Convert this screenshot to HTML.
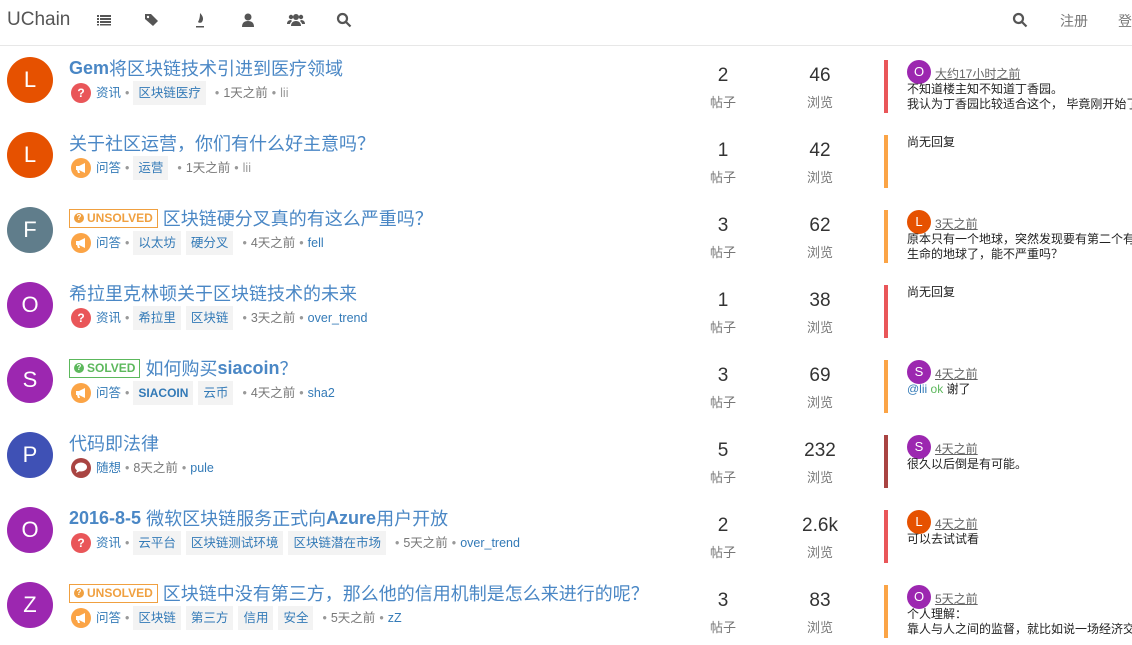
<!DOCTYPE html>
<html><head><meta charset="utf-8"><style>
*{margin:0;padding:0;box-sizing:border-box}
body{width:1132px;height:640px;overflow:hidden;background:#fff;font-family:"Liberation Sans","Noto Sans CJK SC",sans-serif;color:#333;position:relative}
.hdr{position:absolute;left:0;top:0;width:1132px;height:46px;border-bottom:1px solid #e7e7e7}
.logo{position:absolute;left:7px;top:9px;font-size:19px;color:#555}
.ic{position:absolute;top:12px;width:16px;height:16px}
.nav{position:absolute;top:11px;font-size:14px;color:#777;white-space:nowrap}
.row{position:absolute;left:0;width:1132px;height:75px}
.av{position:absolute;left:7px;top:12px;width:46px;height:46px;border-radius:50%;color:#fff;font-size:22px;text-align:center;line-height:46px}
.title{position:absolute;left:69px;top:11px;font-size:18px;color:#4a87c5;white-space:nowrap;display:flex;align-items:center;height:24px}
.title b{font-weight:bold}
.badge{display:inline-flex;align-items:center;font-size:12px;font-weight:bold;border:1px solid;padding:0 4px;height:19px;margin-right:5px}
.q{display:inline-block;width:10px;height:10px;border-radius:50%;color:#fff;font-size:8px;line-height:10px;text-align:center;margin-right:3px}
.meta{position:absolute;left:71px;top:36px;font-size:12.5px;color:#777;white-space:nowrap;height:24px;line-height:24px}
.meta>span{display:inline-block;vertical-align:top;height:24px;line-height:24px}
.meta>span.cat{width:20px;height:20px;margin-top:2px;border-radius:50%;color:#fff;font-size:12px;font-weight:bold;margin-right:5px;text-align:center;line-height:20px}
.cat svg{display:block}
.cn{color:#337ab7}
.meta>span.dot{margin:0 4px;color:#999}
.meta>span.tag{background:#f3f3f3;color:#337ab7;padding:0 5px;margin-right:5px}
.a{color:#337ab7}
.num{position:absolute;top:20px;width:80px;text-align:center;font-size:19px;color:#333}
.lab{position:absolute;top:47px;width:80px;text-align:center;font-size:13px;color:#777}
.bar{position:absolute;left:884px;top:15px;width:4px;height:53px}
.rav{position:absolute;left:907px;top:15px;width:24px;height:24px;border-radius:50%;color:#fff;font-size:13px;text-align:center;line-height:24px}
.rt{position:absolute;left:935px;top:20px;font-size:12px;color:#666;text-decoration:underline}
.rc{position:absolute;left:907px;top:37px;font-size:12px;line-height:15px;color:#222;white-space:nowrap}
</style></head><body>
<svg width="0" height="0" style="position:absolute"><defs>
<symbol id="mega" viewBox="0 0 20 20"><path d="M5 8h3l6-3v10l-6-3H5z M6 12l1 3h2l-1-3z" fill="#fff"/></symbol>
<symbol id="chat" viewBox="0 0 20 20"><ellipse cx="10" cy="9" rx="6" ry="4.5" fill="#fff"/><path d="M6 12l-1 3 4-2z" fill="#fff"/></symbol>
</defs></svg>
<div class="hdr">
<div class="logo">UChain</div>
<svg class="ic" style="left:96px" viewBox="0 0 16 16" fill="#555"><rect x="1" y="3" width="2" height="2"/><rect x="4" y="3" width="11" height="2"/><rect x="1" y="6" width="2" height="2"/><rect x="4" y="6" width="11" height="2"/><rect x="1" y="9" width="2" height="2"/><rect x="4" y="9" width="11" height="2"/><rect x="1" y="12" width="2" height="1.5"/><rect x="4" y="12" width="11" height="1.5"/></svg>
<svg class="ic" style="left:144px" viewBox="0 0 16 16" fill="#555"><path d="M1 2h6l7 7-5 5-8-7z"/><circle cx="4" cy="5" r="1.2" fill="#fff"/></svg>
<svg class="ic" style="left:192px" viewBox="0 0 16 16" fill="#555"><path d="M8 1c3 3 4 6 2 9-1 1-3 1-4 0 1-2 2-4 2-9zM4 14h8v1.5H4z"/></svg>
<svg class="ic" style="left:240px" viewBox="0 0 16 16" fill="#555"><circle cx="8" cy="5" r="3.5"/><path d="M2 15c0-4 2-6 6-6s6 2 6 6z"/></svg>
<svg class="ic" style="left:287px;width:18px" viewBox="0 0 18 16" fill="#555"><circle cx="9" cy="5" r="3"/><circle cx="4" cy="5" r="2.2"/><circle cx="14" cy="5" r="2.2"/><path d="M4 14c0-3 2-5 5-5s5 2 5 5z"/><path d="M0 12c0-2 1-4 4-4l1 1c-1 1-2 2-2 3z"/><path d="M18 12c0-2-1-4-4-4l-1 1c1 1 2 2 2 3z"/></svg>
<svg class="ic" style="left:336px" viewBox="0 0 16 16" fill="none" stroke="#555" stroke-width="2.2"><circle cx="6.5" cy="6.5" r="4.5"/><path d="M10 10l4.5 4.5"/></svg>
<svg class="ic" style="left:1012px" viewBox="0 0 16 16" fill="none" stroke="#555" stroke-width="2.2"><circle cx="6.5" cy="6.5" r="4.5"/><path d="M10 10l4.5 4.5"/></svg>
<div class="nav" style="left:1060px">注册</div>
<div class="nav" style="left:1118px">登录</div>
</div>

<div class="row" style="top:45px">
<div class="av" style="background:#e65100">L</div>
<div class="title"><b>Gem</b>将区块链技术引进到医疗领域</div>
<div class="meta"><span class="cat" style="background:#e95659">?</span><span class="cn">资讯</span><span class="dot">•</span><span class="tag">区块链医疗</span><span class="dot">•</span><span>1天之前</span><span class="dot">•</span><span style="color:#999">lii</span></div>
<div class="num" style="left:683px">2</div><div class="lab" style="left:683px">帖子</div>
<div class="num" style="left:780px">46</div><div class="lab" style="left:780px">浏览</div>
<div class="bar" style="background:#e95659"></div>
<div class="rav" style="background:#9c27b0">O</div><div class="rt">大约17小时之前</div>
<div class="rc">不知道楼主知不知道丁香园。<br>我认为丁香园比较适合这个， 毕竟刚开始了</div>
</div>

<div class="row" style="top:120px">
<div class="av" style="background:#e65100">L</div>
<div class="title">关于社区运营，你们有什么好主意吗？</div>
<div class="meta"><span class="cat" style="background:#fba446"><svg width="20" height="20"><use href="#mega"/></svg></span><span class="cn">问答</span><span class="dot">•</span><span class="tag">运营</span><span class="dot">•</span><span>1天之前</span><span class="dot">•</span><span style="color:#999">lii</span></div>
<div class="num" style="left:683px">1</div><div class="lab" style="left:683px">帖子</div>
<div class="num" style="left:780px">42</div><div class="lab" style="left:780px">浏览</div>
<div class="bar" style="background:#fba446"></div>
<div class="rc" style="top:15px">尚无回复</div>
</div>

<div class="row" style="top:195px">
<div class="av" style="background:#607d8b">F</div>
<div class="title"><span class="badge" style="color:#f0a040;border-color:#f0a040"><span class="q" style="background:#f0a040">?</span>UNSOLVED</span>区块链硬分叉真的有这么严重吗？</div>
<div class="meta"><span class="cat" style="background:#fba446"><svg width="20" height="20"><use href="#mega"/></svg></span><span class="cn">问答</span><span class="dot">•</span><span class="tag">以太坊</span><span class="tag">硬分叉</span><span class="dot">•</span><span>4天之前</span><span class="dot">•</span><span class="a">fell</span></div>
<div class="num" style="left:683px">3</div><div class="lab" style="left:683px">帖子</div>
<div class="num" style="left:780px">62</div><div class="lab" style="left:780px">浏览</div>
<div class="bar" style="background:#fba446"></div>
<div class="rav" style="background:#e65100">L</div><div class="rt">3天之前</div>
<div class="rc">原本只有一个地球，突然发现要有第二个有<br>生命的地球了，能不严重吗？</div>
</div>

<div class="row" style="top:270px">
<div class="av" style="background:#9c27b0">O</div>
<div class="title">希拉里克林顿关于区块链技术的未来</div>
<div class="meta"><span class="cat" style="background:#e95659">?</span><span class="cn">资讯</span><span class="dot">•</span><span class="tag">希拉里</span><span class="tag">区块链</span><span class="dot">•</span><span>3天之前</span><span class="dot">•</span><span class="a">over_trend</span></div>
<div class="num" style="left:683px">1</div><div class="lab" style="left:683px">帖子</div>
<div class="num" style="left:780px">38</div><div class="lab" style="left:780px">浏览</div>
<div class="bar" style="background:#e95659"></div>
<div class="rc" style="top:15px">尚无回复</div>
</div>

<div class="row" style="top:345px">
<div class="av" style="background:#9c27b0">S</div>
<div class="title"><span class="badge" style="color:#5cb85c;border-color:#5cb85c"><span class="q" style="background:#5cb85c">?</span>SOLVED</span>如何购买<b>siacoin</b>？</div>
<div class="meta"><span class="cat" style="background:#fba446"><svg width="20" height="20"><use href="#mega"/></svg></span><span class="cn">问答</span><span class="dot">•</span><span class="tag" style="font-weight:bold;font-size:12px">SIACOIN</span><span class="tag">云币</span><span class="dot">•</span><span>4天之前</span><span class="dot">•</span><span class="a">sha2</span></div>
<div class="num" style="left:683px">3</div><div class="lab" style="left:683px">帖子</div>
<div class="num" style="left:780px">69</div><div class="lab" style="left:780px">浏览</div>
<div class="bar" style="background:#fba446"></div>
<div class="rav" style="background:#9c27b0">S</div><div class="rt">4天之前</div>
<div class="rc"><span class="a">@lii</span> <span style="color:#5cb85c">ok</span> 谢了</div>
</div>

<div class="row" style="top:420px">
<div class="av" style="background:#3f51b5">P</div>
<div class="title">代码即法律</div>
<div class="meta"><span class="cat" style="background:#a94442"><svg width="20" height="20"><use href="#chat"/></svg></span><span class="cn">随想</span><span class="dot">•</span><span>8天之前</span><span class="dot">•</span><span class="a">pule</span></div>
<div class="num" style="left:683px">5</div><div class="lab" style="left:683px">帖子</div>
<div class="num" style="left:780px">232</div><div class="lab" style="left:780px">浏览</div>
<div class="bar" style="background:#a94442"></div>
<div class="rav" style="background:#9c27b0">S</div><div class="rt">4天之前</div>
<div class="rc">很久以后倒是有可能。</div>
</div>

<div class="row" style="top:495px">
<div class="av" style="background:#9c27b0">O</div>
<div class="title"><b>2016-8-5</b>&nbsp;微软区块链服务正式向<b>Azure</b>用户开放</div>
<div class="meta"><span class="cat" style="background:#e95659">?</span><span class="cn">资讯</span><span class="dot">•</span><span class="tag">云平台</span><span class="tag">区块链测试环境</span><span class="tag">区块链潜在市场</span><span class="dot">•</span><span>5天之前</span><span class="dot">•</span><span class="a">over_trend</span></div>
<div class="num" style="left:683px">2</div><div class="lab" style="left:683px">帖子</div>
<div class="num" style="left:780px">2.6k</div><div class="lab" style="left:780px">浏览</div>
<div class="bar" style="background:#e95659"></div>
<div class="rav" style="background:#e65100">L</div><div class="rt">4天之前</div>
<div class="rc">可以去试试看</div>
</div>

<div class="row" style="top:570px">
<div class="av" style="background:#9c27b0">Z</div>
<div class="title"><span class="badge" style="color:#f0a040;border-color:#f0a040"><span class="q" style="background:#f0a040">?</span>UNSOLVED</span>区块链中没有第三方，那么他的信用机制是怎么来进行的呢？</div>
<div class="meta"><span class="cat" style="background:#fba446"><svg width="20" height="20"><use href="#mega"/></svg></span><span class="cn">问答</span><span class="dot">•</span><span class="tag">区块链</span><span class="tag">第三方</span><span class="tag">信用</span><span class="tag">安全</span><span class="dot">•</span><span>5天之前</span><span class="dot">•</span><span class="a">zZ</span></div>
<div class="num" style="left:683px">3</div><div class="lab" style="left:683px">帖子</div>
<div class="num" style="left:780px">83</div><div class="lab" style="left:780px">浏览</div>
<div class="bar" style="background:#fba446"></div>
<div class="rav" style="background:#9c27b0">O</div><div class="rt">5天之前</div>
<div class="rc">个人理解：<br>靠人与人之间的监督，就比如说一场经济交</div>
</div>
</body></html>
